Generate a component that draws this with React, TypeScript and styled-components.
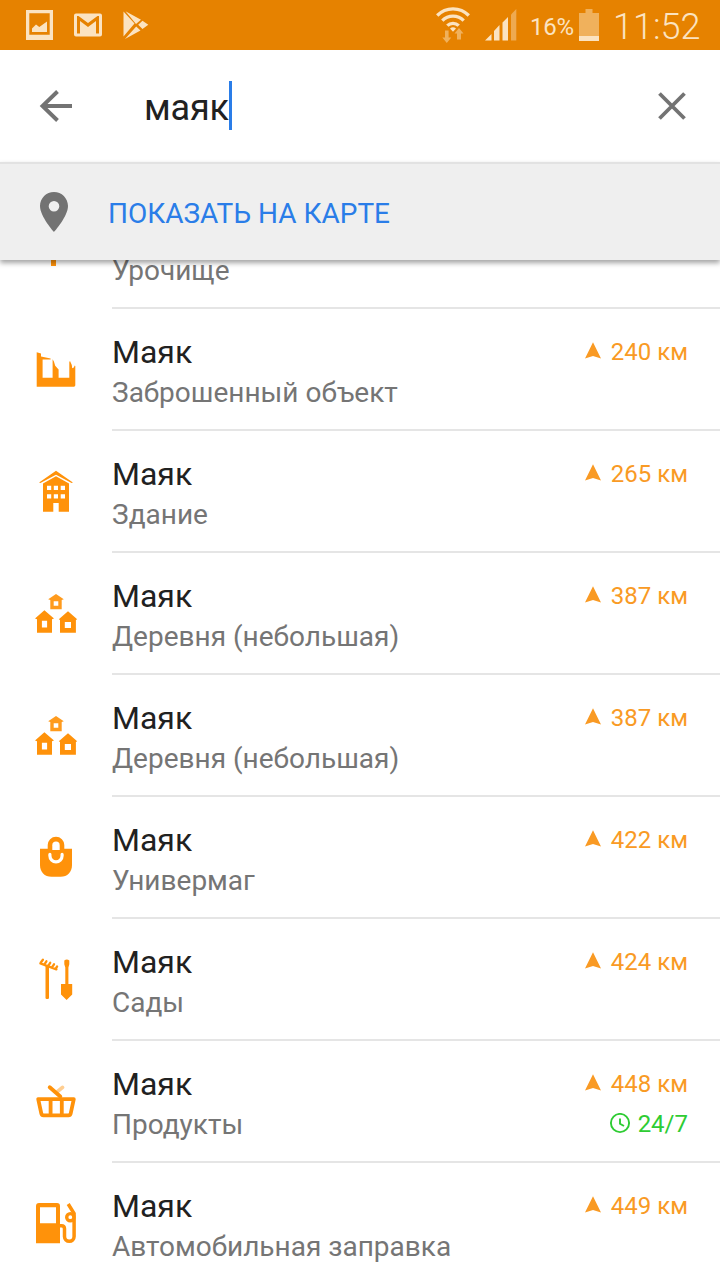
import React from 'react';
import styled, { createGlobalStyle } from 'styled-components';

const GlobalStyle = createGlobalStyle`
  * { box-sizing: border-box; }
  body { margin: 0; background: #fff; font-family: Roboto, "Noto Sans", sans-serif; }
`;

const Screen = styled.div`
  width: 720px;
  height: 1280px;
  overflow: hidden;
  display: flex;
  flex-direction: column;
  background: #fff;
`;

const StatusBar = styled.header`
  flex: none;
  height: 50px;
  padding: 0 20px 0 26px;
  display: flex;
  align-items: center;
  justify-content: space-between;
  background: #e68200;
  color: #fbe3c1;
`;

const Notifications = styled.div`
  display: flex;
  align-items: center;
  gap: 20px;
`;

const SystemInfo = styled.div`
  display: flex;
  align-items: center;
`;

const SignalIcon = styled.svg`
  display: block;
  flex: none;
  margin-left: 15px;
  fill: currentColor;
`;

const BatteryLevel = styled.span`
  margin: 4px 6px 0 12px;
  width: 43px;
  font-size: 24px;
  line-height: 30px;
  letter-spacing: -0.3px;
  white-space: nowrap;
`;

const Clock = styled.span`
  margin: 3px 0 0 14px;
  width: 87px;
  font-size: 36px;
  font-weight: 300;
  line-height: 42px;
  white-space: nowrap;
`;

const SearchBar = styled.div`
  flex: none;
  height: 112px;
  padding: 0 24px 0 32px;
  display: flex;
  align-items: center;
`;

const IconButton = styled.button`
  width: 48px;
  height: 48px;
  padding: 0;
  border: 0;
  background: none;
  color: #737373;
`;

const Query = styled.div`
  flex: 1;
  display: flex;
  align-items: center;
  margin-left: 64px;
  color: #212121;
`;

const QueryText = styled.span`
  padding-top: 4px;
  font-size: 36px;
  line-height: 42px;
  letter-spacing: -0.2px;
`;

const Caret = styled.span`
  width: 3px;
  height: 49px;
  margin-bottom: 1px;
  background: #2a7de8;
`;

const MapBar = styled.div`
  position: relative;
  z-index: 1;
  flex: none;
  height: 98px;
  padding-left: 32px;
  display: flex;
  align-items: center;
  gap: 32px;
  border-top: 2px solid #e2e2e2;
  background: #efefef;
  box-shadow: 0 3px 5px rgba(0, 0, 0, 0.36);
  color: #737373;
`;

const MapLabel = styled.span`
  padding-top: 3px;
  font-size: 28px;
  line-height: 34px;
  color: #2a7de8;
`;

const Results = styled.ul`
  margin: 0;
  padding: 0;
  list-style: none;
`;

const Item = styled.li<{ $visible?: number }>`
  height: ${p => p.$visible ?? 122}px;
  display: flex;
  align-items: flex-end;
  overflow: hidden;
`;

const Row = styled.div`
  flex: 1;
  height: 122px;
  padding-left: 32px;
  display: flex;
  align-items: center;
  gap: 32px;
  color: #ff920a;
`;

const RowBody = styled.div`
  flex: 1;
  height: 122px;
  padding: 23px 32px 0 0;
  display: flex;
  justify-content: space-between;
  border-bottom: 2px solid #e5e5e5;
`;

const Names = styled.div`
  height: 78px;
  display: flex;
  flex-direction: column;
  justify-content: flex-end;
  gap: 5px;
`;

const Title = styled.span`
  font-size: 32px;
  line-height: 38px;
  color: #212121;
`;

const Category = styled.span`
  font-size: 28px;
  line-height: 34px;
  color: #757575;
`;

const Meta = styled.div`
  display: flex;
  flex-direction: column;
  align-items: flex-end;
  gap: 10px;
  padding-top: 5px;
`;

const MetaLine = styled.span<{ $open?: boolean }>`
  display: flex;
  align-items: center;
  gap: ${p => (p.$open ? 7 : 9)}px;
  font-size: 24px;
  line-height: 30px;
  color: ${p => (p.$open ? '#2ecc33' : '#f99a24')};
`;

const Glyph = styled.svg`
  display: block;
  flex: none;
  fill: currentColor;
`;

type Kind = 'sign' | 'ruins' | 'building' | 'village' | 'bag' | 'garden' | 'basket' | 'fuel';

const shapes: Record<Kind, React.ReactNode> = {
  sign: <path d="M8 6h28l5 6-5 6H24v24h-5V18H8z" />,
  ruins: (
    <path
      fillRule="evenodd"
      d="M4.7 6.3 9 7.6v2.9l9.6 2v.9h-8v18.4h10V13.2l1.3 2.3 1.3 4.3 3.4 3.7v8.3h10.7V16l.7-1 1.8 4 .4 3.2 1.6-.6.9-2.2.6.6v19.5l-1 1.2H4.7z"
    />
  ),
  building: (
    <path
      fillRule="evenodd"
      d="M24 2.7 40.9 14.5l-1.3.5L24 6.7 8.4 15l-1.3-.5zM24 8.2l13 7.2v28.3H26.7V35h-5.4v8.7H11V15.4zM15 17.7V22h4.2v-4.3zm6.8 0V22H26v-4.3zm6.9 0V22H33v-4.3zM15 26.2v4.3h4.2v-4.3zm6.8 0v4.3H26v-4.3zm6.9 0v4.3H33v-4.3z"
    />
  ),
  village: (
    <>
      <path fillRule="evenodd" d="M24 4l7.8 5.2-2.1.7v9.4H18.3V9.9l-2.1-.7zM21.7 11.3v4.4h4.6v-4.4z" opacity=".92" />
      <path fillRule="evenodd" d="M12.4 20.3 22 28.4l-2 .9v13.4H5V29.3l-2-.9zM9.9 30.8v6.6h5.2v-6.6z" />
      <path fillRule="evenodd" d="M36 21.2l9.2 8-1.3.7v12.8H28V29.9l-1.2-.7zM32.8 32v6H39v-6z" />
    </>
  ),
  bag: (
    <>
      <path d="M8 14.8h32V31c0 7-4.5 11.8-11.5 11.8h-9C12.5 42.8 8 38 8 31z" />
      <path d="M17.9 17.8v-6.7a6.1 6.1 0 0 1 12.2 0v6.7z" stroke="currentColor" strokeWidth="4.4" />
      <path d="M20.3 16v-4.800a3.700 3.700 0 0 1 7.400 0V16z" fill="#fff" />
      <path d="M17.9 20.4v1.4a6.1 6.1 0 0 0 12.2 0v-1.4" fill="none" stroke="#fff" strokeWidth="3.2" strokeLinecap="round" />
    </>
  ),
  garden: (
    <>
      <path d="M13.500 10h3.500v32.200q-1.700 1.800-3.500 0z" />
      <path
        d="M8.400 7.300l16 6M8.700 6.800l2.200-3M12.400 8.300l2-3M16.200 9.800l2-3M20.100 11.200l1.900-2.900M23.700 12.800l1.400-2.400"
        fill="none"
        stroke="currentColor"
        strokeWidth="2.3"
        strokeLinecap="round"
      />
      <path d="M32.300 4.500q2.500-2 5 0v3.800L36.400 11.500V28h3.800v10.500L34.600 44 29 38.500V28h4.300V11.500l-1-3.200z" />
    </>
  ),
  basket: (
    <g fill="none" stroke="currentColor" strokeWidth="3.8" strokeLinecap="round" strokeLinejoin="round">
      <path d="M30.500 9.400l-6 5" opacity=".45" />
      <path d="M17.700 9.200 28.300 18.500" />
      <path d="M6.200 21.200h35.600l-3.200 14.600q-.4 1.500-2 1.500H11.400q-1.600 0-2-1.500z" />
      <path d="M18.600 22.500v13M29.800 22.500v13" />
    </g>
  ),
  fuel: (
    <>
      <path fillRule="evenodd" d="M7 3h18q3 0 3 3v37.200H4V6q0-3 3-3zM8 7.200v16h16v-16z" />
      <path
        d="M28 25.800h1.500q3 0 3 3v7.700a4.800 4.800 0 0 0 9.600 0V13.500L36.200 4"
        fill="none"
        stroke="currentColor"
        strokeWidth="3.5"
      />
      <circle cx="38.3" cy="17.2" r="3.6" fill="#fff" stroke="currentColor" strokeWidth="3.4" />
    </>
  ),
};

const KindIcon = ({ kind }: { kind: Kind }) => (
  <Glyph width="48" height="48" viewBox="0 0 48 48">{shapes[kind]}</Glyph>
);

interface Place {
  kind: Kind;
  title?: string;
  category: string;
  distance?: string;
  hours?: string;
  visible?: number;
}

const places: Place[] = [
  { kind: 'sign', category: 'Урочище', visible: 49 },
  { kind: 'ruins', title: 'Маяк', category: 'Заброшенный объект', distance: '240 км' },
  { kind: 'building', title: 'Маяк', category: 'Здание', distance: '265 км' },
  { kind: 'village', title: 'Маяк', category: 'Деревня (небольшая)', distance: '387 км' },
  { kind: 'village', title: 'Маяк', category: 'Деревня (небольшая)', distance: '387 км' },
  { kind: 'bag', title: 'Маяк', category: 'Универмаг', distance: '422 км' },
  { kind: 'garden', title: 'Маяк', category: 'Сады', distance: '424 км' },
  { kind: 'basket', title: 'Маяк', category: 'Продукты', distance: '448 км', hours: '24/7' },
  { kind: 'fuel', title: 'Маяк', category: 'Автомобильная заправка', distance: '449 км' },
];

const PlaceRow = ({ place }: { place: Place }) => (
  <Item $visible={place.visible}>
    <Row>
      <KindIcon kind={place.kind} />
      <RowBody>
        <Names>
          {place.title && <Title>{place.title}</Title>}
          <Category>{place.category}</Category>
        </Names>
        <Meta>
          {place.distance && (
            <MetaLine>
              <Glyph width="18" height="20" viewBox="0 0 18 20">
                <path d="M9 .3 17 16.600 9 14 1 16.600z" />
              </Glyph>
              {place.distance}
            </MetaLine>
          )}
          {place.hours && (
            <MetaLine $open>
              <Glyph width="22" height="22" viewBox="0 0 22 22">
                <g fill="none" stroke="currentColor" strokeWidth="1.9">
                  <circle cx="11" cy="10" r="9.1" />
                  <path d="M11 5.500v5.200l4 2.300" />
                </g>
              </Glyph>
              {place.hours}
            </MetaLine>
          )}
        </Meta>
      </RowBody>
    </Row>
  </Item>
);

const App = () => (
  <Screen>
    <GlobalStyle />
    <StatusBar>
      <Notifications>
        <Glyph width="28" height="30" viewBox="0 0 28 30">
          <path fillRule="evenodd" d="M0 0h27v30H0zM3.300 3.300v21.400h20.400V3.300z" />
          <path d="M6 22v-3.500l4-4 3.300 2.500L21 11.500V22z" />
        </Glyph>
        <Glyph width="28" height="24" viewBox="0 0 28 24">
          <path
            fillRule="evenodd"
            d="M2 .5h24q2 0 2 2v19q0 2-2 2H2q-2 0-2-2v-19q0-2 2-2zM3 3v17.500h3V8l8 6 8-6v12.500h3V3h-1.500L14 10 4.500 3z"
          />
        </Glyph>
        <Glyph width="28" height="28" viewBox="0 0 28 28">
          <path d="M1.500.5 12.500 12.500 1.500 25.500zM3.500.3 19 8.800 14 13zM20.500 9.800l5.800 3.900-5.800 4.300-4.300-4.200zM14.200 15.400l4.300 4L3 28z" />
        </Glyph>
      </Notifications>
      <SystemInfo>
        <Glyph width="34" height="36" viewBox="0 0 34 36">
          <g fill="none" stroke="currentColor" strokeWidth="3.3">
            <path d="M1.200 8.500a22 22 0 0 1 31.600 0M6.300 13.700a15 15 0 0 1 21.400 0M11.300 18.700a8 8 0 0 1 11.400 0" />
          </g>
          <path d="M14 21.500q3-2.500 6 0l-3 3.200z" />
          <path d="M9 23.500h3.600v7h2.700L10.800 36 6.300 30.500H9zM21 32.500h4v-6h2.500L23 21l-4.500 5.500H21z" opacity=".48" />
        </Glyph>
        <SignalIcon width="33" height="32" viewBox="0 0 33 32">
          <path d="M0 31.500 6.500 25v6.500zM9 22l5.500-6v15.500H9zM17.500 13.500 23 8v23.500h-5.500z" />
          <path d="M26 5.500 31.300 0v31.500H26z" opacity=".42" />
        </SignalIcon>
        <BatteryLevel>16%</BatteryLevel>
        <Glyph width="20" height="32" viewBox="0 0 20 32">
          <path d="M6.500 0h7v4H20v23H0V4h6.500z" opacity=".48" />
          <path d="M0 27h20v5H0z" />
        </Glyph>
        <Clock>11:52</Clock>
      </SystemInfo>
    </StatusBar>
    <SearchBar>
      <IconButton aria-label="Назад">
        <Glyph width="48" height="48" viewBox="0 0 48 48">
          <path d="M25.500 9.500 10.500 24l15 14.500M11 24h29" fill="none" stroke="currentColor" strokeWidth="3.9" />
        </Glyph>
      </IconButton>
      <Query>
        <QueryText>маяк</QueryText>
        <Caret />
      </Query>
      <IconButton aria-label="Очистить">
        <Glyph width="48" height="48" viewBox="0 0 48 48">
          <path d="M11.500 11.500l25 25M36.500 11.500l-25 25" fill="none" stroke="currentColor" strokeWidth="3.8" />
        </Glyph>
      </IconButton>
    </SearchBar>
    <MapBar>
      <Glyph width="44" height="48" viewBox="0 0 44 48">
        <path fillRule="evenodd" d="M22 4c7.700 0 14 6.200 14 14 0 10.500-14 26-14 26S8 28.500 8 18C8 10.200 14.300 4 22 4zm0 9a5.300 5.300 0 1 0 0 10.600A5.300 5.300 0 0 0 22 13z" />
      </Glyph>
      <MapLabel>ПОКАЗАТЬ НА КАРТЕ</MapLabel>
    </MapBar>
    <Results>
      {places.map((place, i) => (
        <PlaceRow key={i} place={place} />
      ))}
    </Results>
  </Screen>
);

export default App;
